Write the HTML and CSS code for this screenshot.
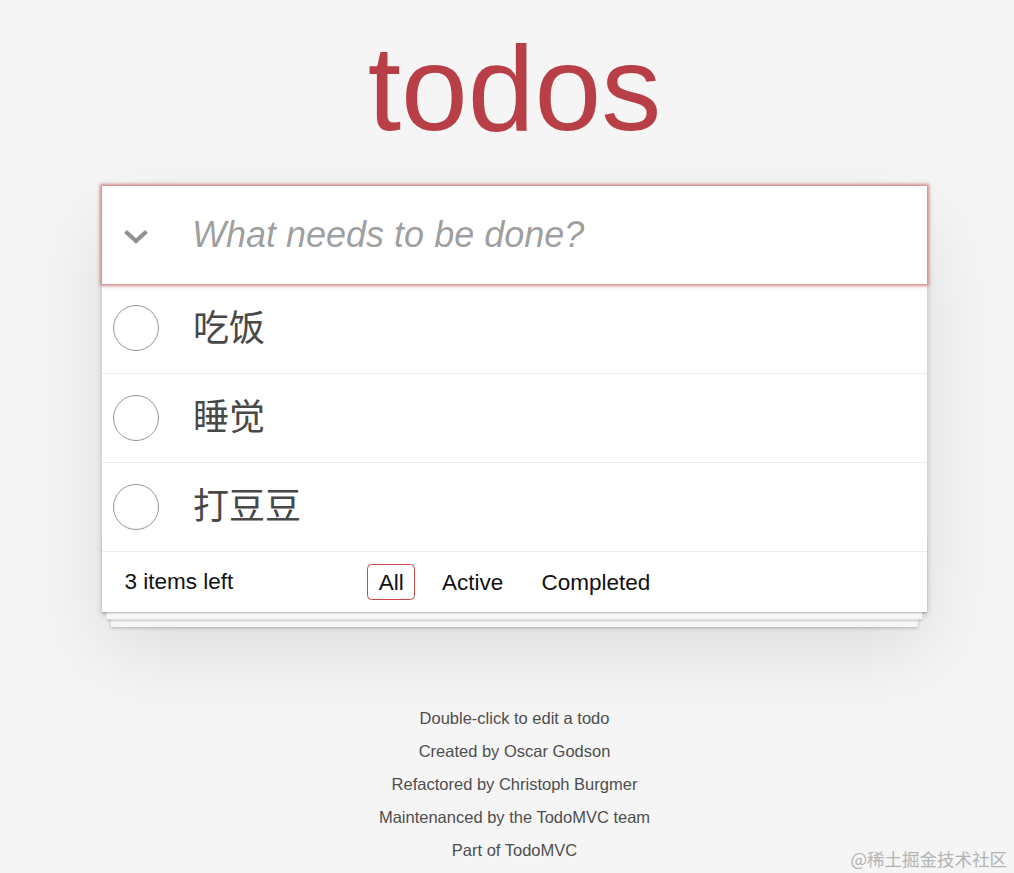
FILE: index.html
```html
<!DOCTYPE html>
<html lang="zh-CN">
<head>
    <meta charset="UTF-8">
    <meta name="viewport" content="width=device-width, initial-scale=1.0">
    <title>Todos</title>
    <link rel="stylesheet" href="styles.css">
</head>
<body>
    <div class="page">
        <h1 class="app-title">todos</h1>

        <section class="todoapp">
            <header class="todo-header">
                <span class="toggle-all">
                    <svg width="26" height="15" viewBox="0 0 26 15">
                        <polyline points="2.5,2.5 13,12 23.5,2.5" fill="none" stroke="#8f8f8f" stroke-width="4" stroke-linecap="butt" stroke-linejoin="miter"/>
                    </svg>
                </span>
                <input class="new-todo" placeholder="What needs to be done?">
            </header>

            <ul class="todo-list">
                <li><span class="toggle"></span><label>吃饭</label></li>
                <li><span class="toggle"></span><label>睡觉</label></li>
                <li><span class="toggle"></span><label>打豆豆</label></li>
            </ul>

            <footer class="todo-footer">
                <span class="todo-count">3 items left</span>
                <ul class="filters">
                    <li><a href="#/" class="selected">All</a></li>
                    <li><a href="#/active">Active</a></li>
                    <li><a href="#/completed">Completed</a></li>
                </ul>
                <span></span>
            </footer>
        </section>

        <footer class="info">
            <p>Double-click to edit a todo</p>
            <p>Created by Oscar Godson</p>
            <p>Refactored by Christoph Burgmer</p>
            <p>Maintenanced by the TodoMVC team</p>
            <p>Part of TodoMVC</p>
        </footer>
    </div>

    <div class="watermark">@稀土掘金技术社区</div>
</body>
</html>
```

FILE: styles.css
```css
/* --- Base --- */
html,
body {
    margin: 0;
    padding: 0;
}

body {
    font-family: 'Liberation Sans', Arial, 'Noto Sans CJK SC', sans-serif;
    font-size: 21px;
    line-height: 29.4px;
    background-color: #f5f5f5;
    color: #111111;
    padding-left: 15px; /* page is centred a little right of the window */
    -webkit-font-smoothing: antialiased;
}

.page {
    width: 825px;
    margin: 0 auto;
}

/* --- Title --- */
.app-title {
    margin: 0 0 38px;
    padding-top: 28px;
    font-size: 120px;
    line-height: 120px;
    font-weight: normal;
    text-align: center;
    color: #b83f45;
    text-rendering: optimizeLegibility;
}

/* --- Card --- */
.todoapp {
    position: relative;
    background-color: #ffffff;
    box-shadow: 0 3px 6px 0 rgba(0, 0, 0, 0.2),
                0 37px 75px 0 rgba(0, 0, 0, 0.1);
}

.todo-header {
    position: relative;
    z-index: 2;
    display: flex;
    align-items: center;
    box-shadow: 0 0 3px 2px #d58a8a; /* focused input ring */
}

.toggle-all {
    width: 68px;
    display: flex;
    justify-content: center;
    align-items: center;
    flex-shrink: 0;
}

.toggle-all svg {
    display: block;
    margin-top: 2px;
}

.new-todo {
    flex: 1;
    min-width: 0;
    margin: 0;
    padding: 24px 24px 24px 22px;
    border: none;
    outline: none;
    background: transparent;
    font-family: inherit;
    font-size: 36px;
    line-height: 50.4px;
    height: 98.4px;
    box-sizing: border-box;
    color: #484848;
}

.new-todo::placeholder {
    font-style: italic;
    color: rgba(0, 0, 0, 0.4);
}

/* --- List --- */
.todo-list {
    margin: 0;
    padding: 0;
    list-style: none;
}

.todo-list li {
    display: flex;
    align-items: center;
    padding-left: 11px;
    border-bottom: 1px solid #ededed;
}

.toggle {
    width: 46px;
    height: 46px;
    box-sizing: border-box;
    border: 1.5px solid #949494;
    border-radius: 50%;
    flex-shrink: 0;
}

.todo-list label {
    flex: 1;
    padding: 22.5px 22.5px 22.5px 34px;
    font-family: 'Liberation Sans', 'Noto Sans CJK SC', sans-serif;
    font-size: 36px;
    line-height: 43.2px;
    color: #484848;
}

/* --- Footer of the card --- */
.todo-footer {
    position: relative;
    display: grid;
    grid-template-columns: 1fr auto 1fr;
    align-items: center;
    height: 30px;
    padding: 15px 22.5px;
    font-size: 22.5px;
}

/* stacked paper edges under the card */
.todo-footer::before {
    content: '';
    position: absolute;
    right: 0;
    bottom: 0;
    left: 0;
    height: 75px;
    overflow: hidden;
    box-shadow: 0 1.5px 1.5px rgba(0, 0, 0, 0.2),
                0 12px 0 -4.5px #f6f6f6,
                0 13.5px 1.5px -4.5px rgba(0, 0, 0, 0.2),
                0 24px 0 -9px #f6f6f6,
                0 25.5px 3px -9px rgba(0, 0, 0, 0.2);
}

.todo-count {
    text-align: left;
}

.filters {
    position: relative;
    z-index: 1;
    margin: 0;
    padding: 0;
    list-style: none;
    white-space: nowrap;
}

.filters li {
    display: inline;
}

.filters li a {
    color: inherit;
    margin: 4.5px;
    padding: 4.5px 10.5px;
    text-decoration: none;
    border: 1.5px solid transparent;
    border-radius: 4.5px;
}

.filters li a.selected {
    border-color: #ce4646;
}

/* --- Info --- */
.info {
    margin-top: 98px;
    color: #4d4d4d;
    font-size: 16.5px;
    text-align: center;
    text-shadow: 0 1px 0 rgba(255, 255, 255, 0.5);
}

.info p {
    margin: 0;
    line-height: 16.5px;
}

.info p + p {
    margin-top: 16.5px;
}

/* --- Watermark --- */
.watermark {
    position: absolute;
    top: 846px;
    right: 7px;
    font-family: 'Noto Sans CJK SC', sans-serif;
    font-size: 17.5px;
    line-height: 25px;
    color: #b3b3b3;
}
```
